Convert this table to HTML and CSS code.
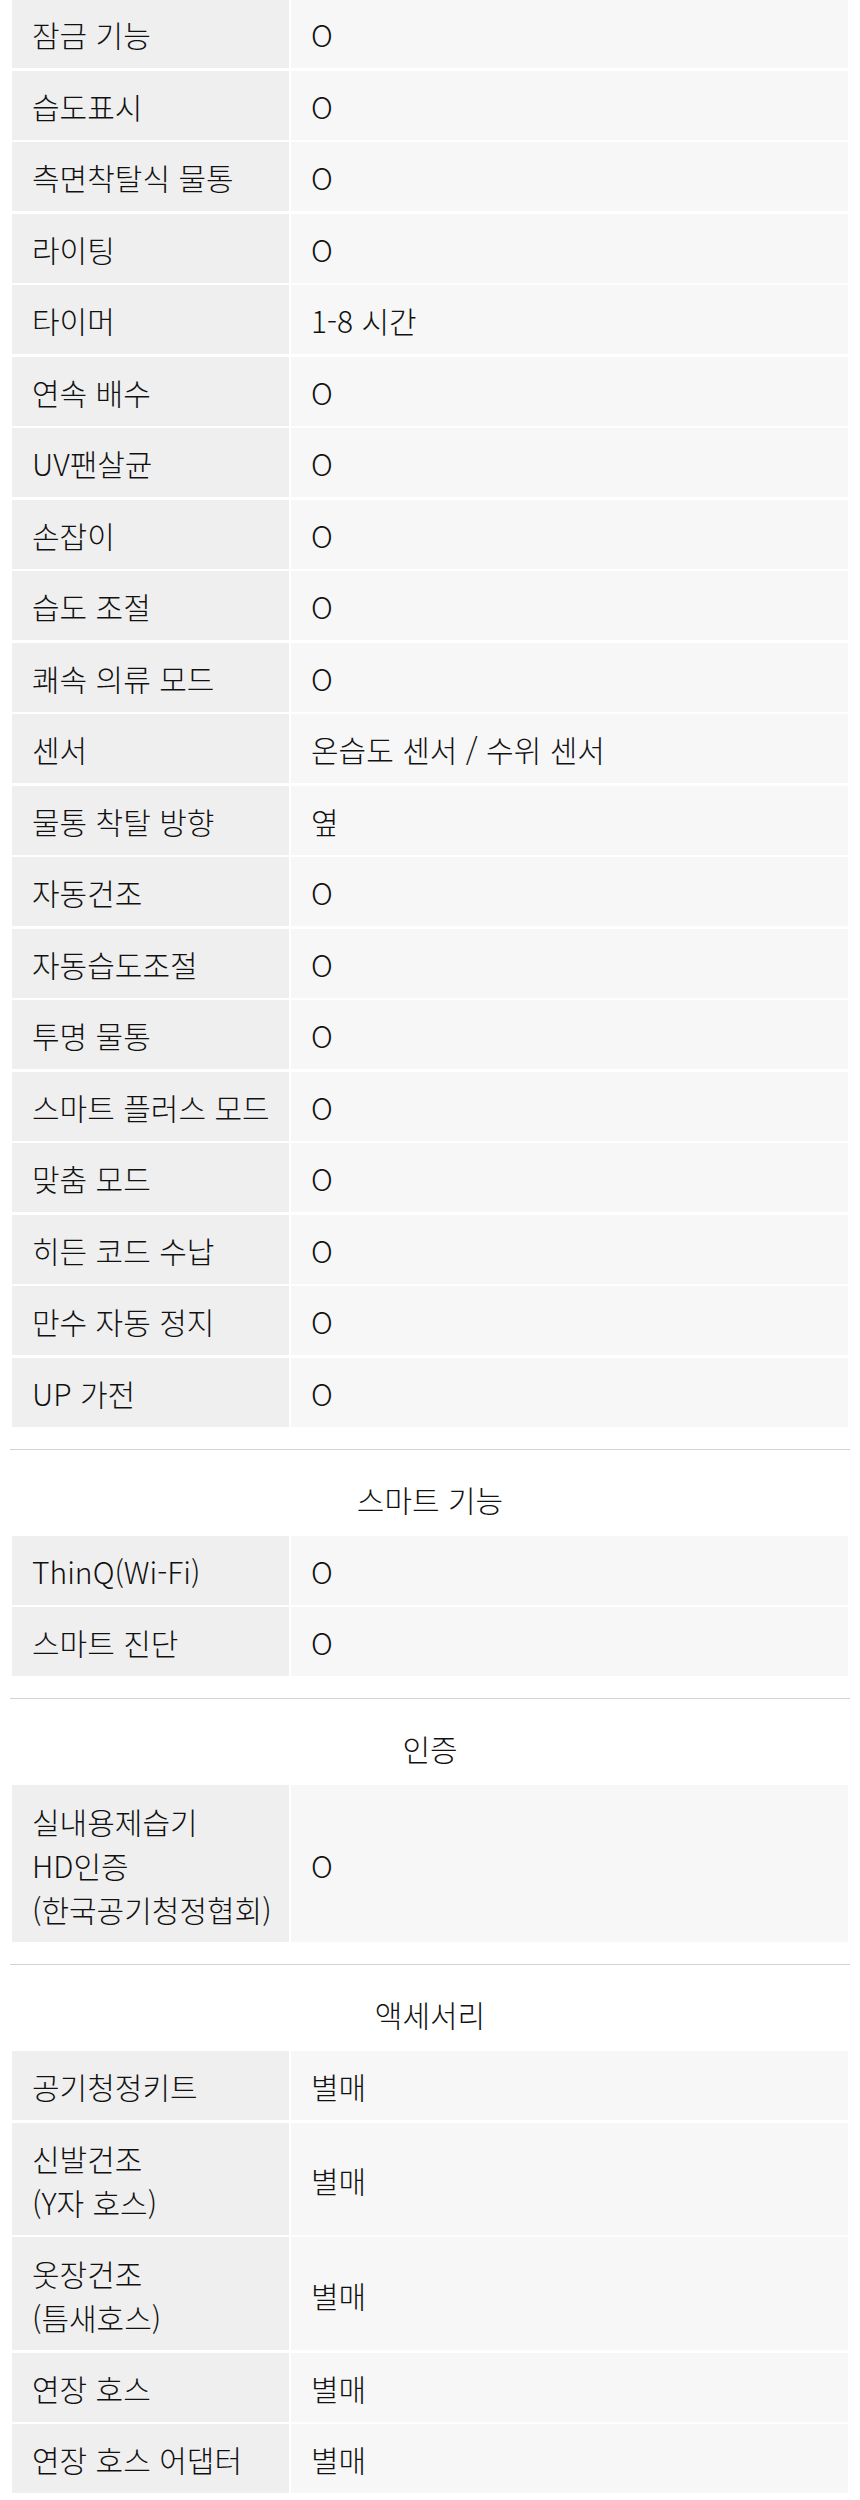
FILE: index.html
```html
<!DOCTYPE html>
<html lang="ko">
<head>
<meta charset="utf-8">
<title>제품 사양</title>
<link rel="stylesheet" href="styles.css">
</head>
<body>
<div class="spec">
  <section class="group group-first">
    <div class="grid">
      <div class="k">잠금 기능</div><div class="v">O</div>
      <div class="k">습도표시</div><div class="v">O</div>
      <div class="k">측면착탈식 물통</div><div class="v">O</div>
      <div class="k">라이팅</div><div class="v">O</div>
      <div class="k">타이머</div><div class="v">1-8 시간</div>
      <div class="k">연속 배수</div><div class="v">O</div>
      <div class="k">UV팬살균</div><div class="v">O</div>
      <div class="k">손잡이</div><div class="v">O</div>
      <div class="k">습도 조절</div><div class="v">O</div>
      <div class="k">쾌속 의류 모드</div><div class="v">O</div>
      <div class="k">센서</div><div class="v">온습도 센서 / 수위 센서</div>
      <div class="k">물통 착탈 방향</div><div class="v">옆</div>
      <div class="k">자동건조</div><div class="v">O</div>
      <div class="k">자동습도조절</div><div class="v">O</div>
      <div class="k">투명 물통</div><div class="v">O</div>
      <div class="k">스마트 플러스 모드</div><div class="v">O</div>
      <div class="k">맞춤 모드</div><div class="v">O</div>
      <div class="k">히든 코드 수납</div><div class="v">O</div>
      <div class="k">만수 자동 정지</div><div class="v">O</div>
      <div class="k">UP 가전</div><div class="v">O</div>
    </div>
  </section>

  <section class="group">
    <h2 class="group-title">스마트 기능</h2>
    <div class="grid">
      <div class="k">ThinQ(Wi-Fi)</div><div class="v">O</div>
      <div class="k">스마트 진단</div><div class="v">O</div>
    </div>
  </section>

  <section class="group">
    <h2 class="group-title">인증</h2>
    <div class="grid">
      <div class="k r3">실내용제습기<br>HD인증<br>(한국공기청정협회)</div><div class="v r3">O</div>
    </div>
  </section>

  <section class="group">
    <h2 class="group-title">액세서리</h2>
    <div class="grid">
      <div class="k">공기청정키트</div><div class="v">별매</div>
      <div class="k r2">신발건조<br>(Y자 호스)</div><div class="v r2">별매</div>
      <div class="k r2b">옷장건조<br>(틈새호스)</div><div class="v r2b">별매</div>
      <div class="k">연장 호스</div><div class="v">별매</div>
      <div class="k">연장 호스 어댑터</div><div class="v">별매</div>
    </div>
  </section>
</div>
</body>
</html>
```

FILE: styles.css
```css
html, body {
  margin: 0;
  padding: 0;
  background: #ffffff;
}

body {
  font-family: "Noto Sans CJK KR", "Noto Sans", sans-serif;
  font-size: 30px;
  font-weight: 300;
  color: #111111;
}

.spec {
  width: 840px;
  margin: -1px 10px 0;
}

.group {
  margin-top: 22px;
  border-top: 1px solid #d3d3d3;
}

.group-first {
  margin-top: 0;
  border-top: 0;
}

.group-title {
  margin: 0;
  padding: 31px 0 18px;
  font-size: 30px;
  font-weight: 300;
  line-height: 37px;
  text-align: center;
  color: #111111;
}

.grid {
  display: grid;
  grid-template-columns: 277px 557px;
  column-gap: 2px;
  row-gap: 2.5px;
  margin: 0 2px;
}

.k, .v {
  display: flex;
  align-items: center;
  min-height: 69px;
  padding: 2px 20px 0;
  box-sizing: border-box;
  line-height: 37px;
  white-space: nowrap;
}

.k {
  background: #efefef;
}

.v {
  background: #f7f7f7;
}

.r2 {
  min-height: 112px;
  line-height: 44px;
}

.r2b {
  min-height: 113px;
  line-height: 44px;
}

.r3 {
  min-height: 157px;
  line-height: 44px;
}
```
